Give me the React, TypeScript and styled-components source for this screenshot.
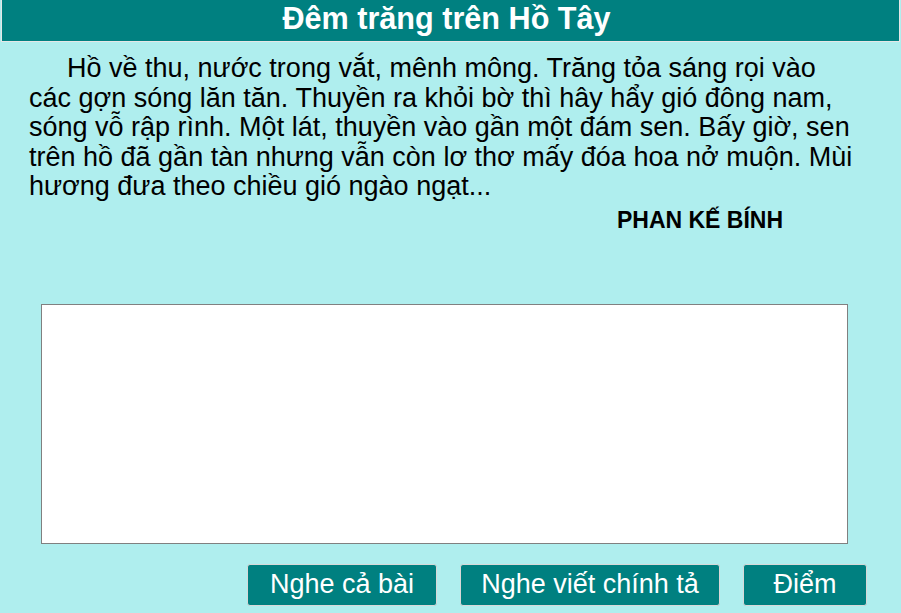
import * as React from 'react'
import styled, { createGlobalStyle } from 'styled-components'

const GlobalStyle = createGlobalStyle`
  html, body {
    margin: 0;
    padding: 0;
    background: #afeeee;
    font-family: "Liberation Sans", Arial, sans-serif;
  }
`

const Page = styled.div`
  width: 901px;
  height: 613px;
  overflow: hidden;
  background: #afeeee;
`

const Header = styled.div`
  margin: 0 1px;
  height: 41px;
  padding-right: 8px;
  border: 1px solid #e6e6e6;
  border-top: none;
  background: #008080;
  color: #ffffff;
  font-size: 30.6px;
  font-weight: bold;
  line-height: 36px;
  text-align: center;
`

const Passage = styled.p`
  margin: 12px 0 0 29px;
  width: 826px;
  font-size: 27px;
  line-height: 29.5px;
  color: #000000;
  text-indent: 38px;
`

const Author = styled.div`
  margin-top: 4px;
  padding-left: 499px;
  width: 402px;
  text-align: center;
  font-size: 23px;
  font-weight: bold;
  line-height: 28px;
  white-space: nowrap;
`

const Answer = styled.textarea`
  display: block;
  margin: 70px 0 0 41px;
  width: 807px;
  height: 240px;
  box-sizing: border-box;
  border: 1px solid #808080;
  background: #ffffff;
  resize: none;
  outline: none;
  font-family: "Liberation Sans", Arial, sans-serif;
  font-size: 20px;
`

const Toolbar = styled.div`
  display: flex;
  justify-content: flex-end;
  gap: 23px;
  margin-top: 20px;
  padding-right: 34px;
`

const Button = styled.button<{ $width: number }>`
  width: ${({ $width }) => $width}px;
  height: 42px;
  border: 1px solid #d8d8d8;
  border-radius: 3px;
  background: #008080;
  color: #ffffff;
  font-family: "Liberation Sans", Arial, sans-serif;
  font-size: 27px;
  padding: 0;
  cursor: pointer;
`

export default function App() {
  return (
    <Page>
      <GlobalStyle />
      <Header>Đêm trăng trên Hồ Tây</Header>
      <Passage>
        Hồ về thu, nước trong vắt, mênh mông. Trăng tỏa sáng rọi vào các gợn sóng lăn tăn.
        Thuyền ra khỏi bờ thì hây hẩy gió đông nam, sóng vỗ rập rình. Một lát, thuyền vào gần
        một đám sen. Bấy giờ, sen trên hồ đã gần tàn nhưng vẫn còn lơ thơ mấy đóa hoa nở muộn.
        Mùi hương đưa theo chiều gió ngào ngạt...
      </Passage>
      <Author>PHAN KẾ BÍNH</Author>
      <Answer />
      <Toolbar>
        <Button $width={190}>Nghe cả bài</Button>
        <Button $width={260}>Nghe viết chính tả</Button>
        <Button $width={124}>Điểm</Button>
      </Toolbar>
    </Page>
  )
}
